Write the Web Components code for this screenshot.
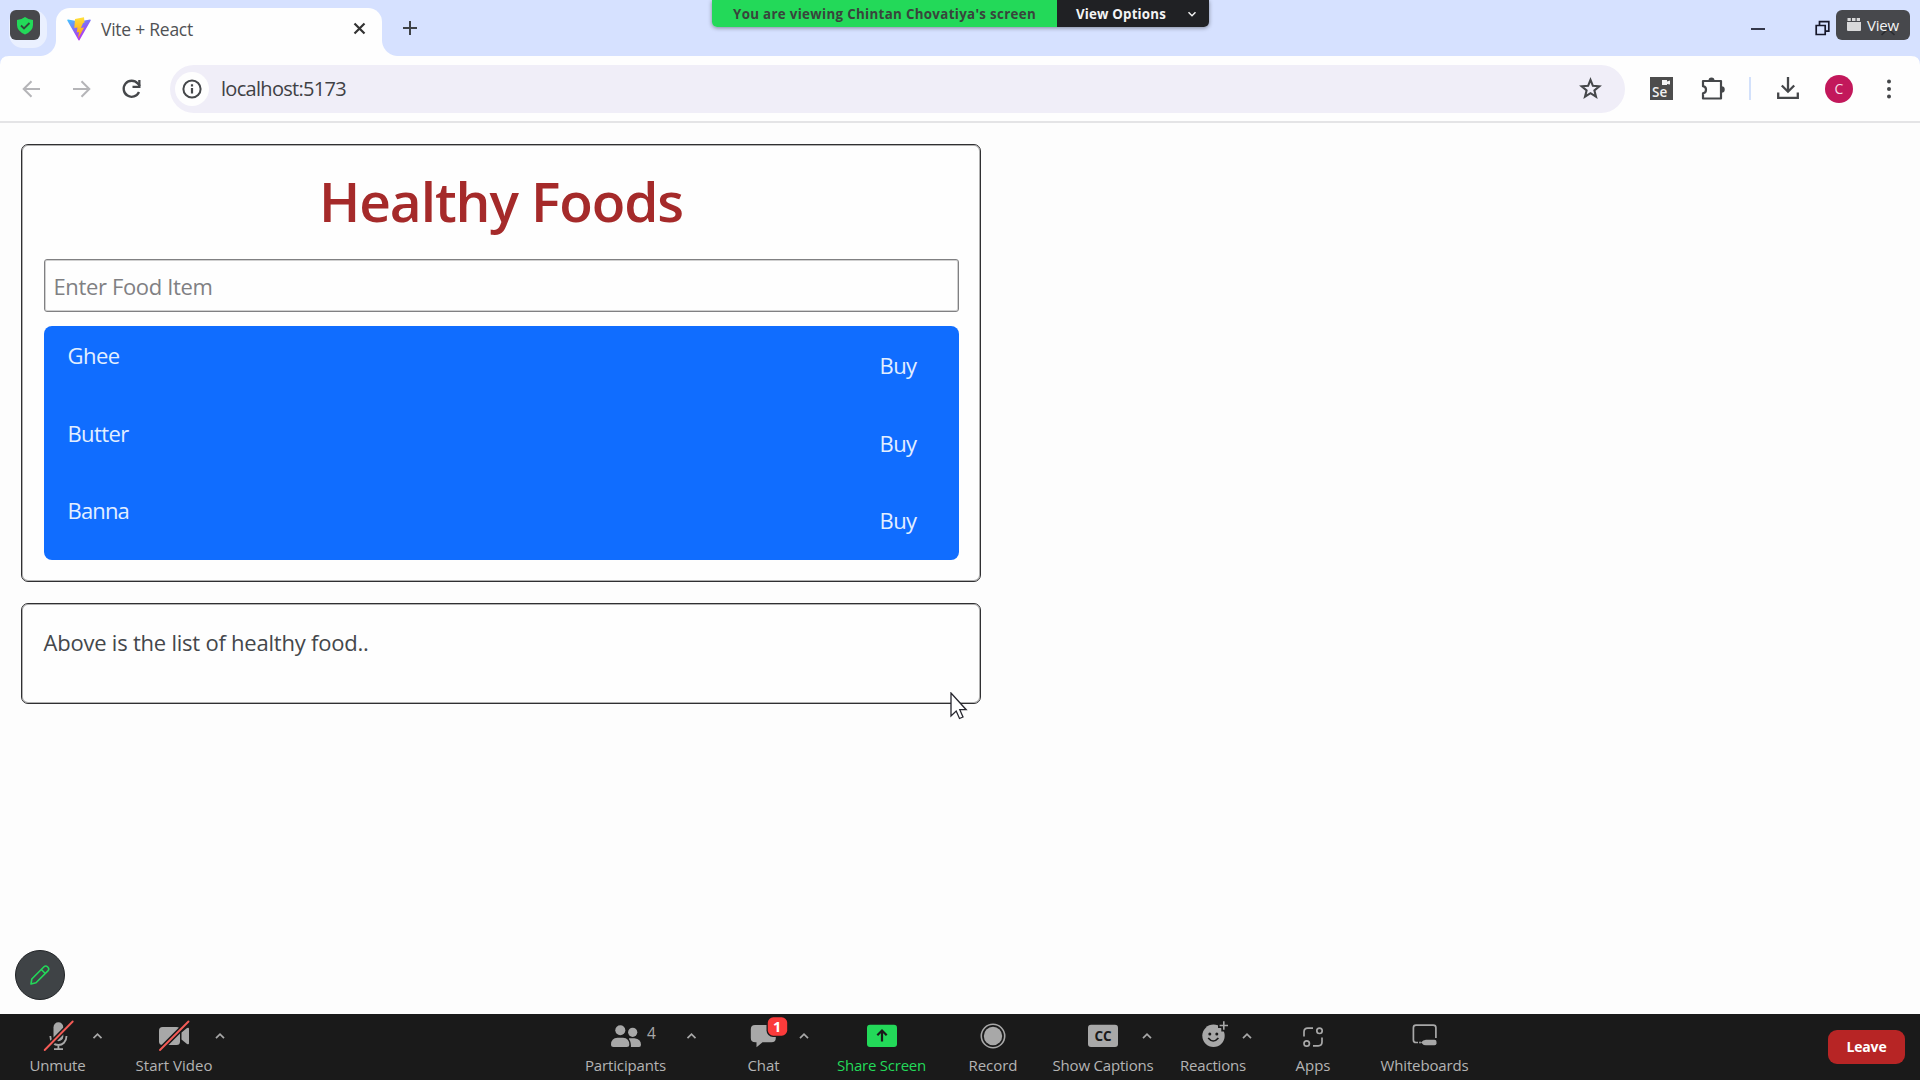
<!DOCTYPE html>
<html lang="en">
<head>
<meta charset="utf-8">
<title>Vite + React</title>
<style>
html,body{margin:0;height:100%;overflow:hidden;background:#fdfdfd}
body{font-family:"Open Sans","Noto Sans",sans-serif}
</style>
</head>
<body>
<meeting-screen></meeting-screen>
<script>
const define = (name, html, ready) => {
  const t = document.createElement('template');
  t.innerHTML = html;
  customElements.define(name, class extends HTMLElement {
    constructor(){ super(); this.attachShadow({mode:'open'}).append(t.content.cloneNode(true)); }
    connectedCallback(){ if (ready) ready(this, this.shadowRoot); }
  });
};

/* One line of text tracked to the width given in "w". */
define('fit-text', `<style>:host{display:block;flex:none;white-space:nowrap}span{display:inline-block}</style><span><slot></slot></span>`,
  (el, root) => {
    const w = +el.getAttribute('w'), s = root.querySelector('span');
    el.style.width = w + 'px';
    s.style.letterSpacing = '0px';
    const n = el.textContent.length, natural = s.getBoundingClientRect().width;
    s.style.letterSpacing = ((w - natural) / n).toFixed(3) + 'px';
  });

define('browser-tabs', `<style>
:host{display:flex;height:56px;background:#d6e1ff;align-items:flex-end;position:relative}
.tab{margin-left:56px;width:326px;height:48px;box-sizing:border-box;background:#fefefe;border-radius:14px 14px 0 0;display:flex;align-items:center;padding:0 16px 7px 11px;position:relative}
.tab:before,.tab:after{content:"";position:absolute;bottom:0;width:16px;height:16px}
.tab:before{left:-16px;background:radial-gradient(circle at 0 0,transparent 15.5px,#fefefe 16.5px)}
.tab:after{right:-16px;background:radial-gradient(circle at 100% 0,transparent 15.5px,#fefefe 16.5px)}
fit-text{font-size:17.5px;color:#505154;margin-left:10px;line-height:24px}
.x{margin-left:auto}
.plus{margin:0 0 20px 20px}
.search{position:absolute;left:9px;top:10px;width:38px;height:38px;border-radius:14px;background:#eaf0ff}
.win{margin-left:auto;margin-right:89px;display:flex;gap:49px;align-self:flex-start;padding-top:20px}
</style>
<div class="search"></div>
<div class="tab">
<svg width="24" height="24" viewBox="0 0 24 24"><defs><linearGradient id="a" x1="0" y1="0" x2=".6" y2="1"><stop offset="0" stop-color="#41c8ff"/><stop offset=".55" stop-color="#8a62f5"/><stop offset="1" stop-color="#c02ff0"/></linearGradient><linearGradient id="b" x1="0" y1="0" x2="0" y2="1"><stop offset="0" stop-color="#ffe03c"/><stop offset="1" stop-color="#ff9d10"/></linearGradient></defs><path d="M1 2.500 12 4.500 23 2.500q1.200 0 .6 1.200L12.600 23q-.6 1-1.200 0L.4 3.700q-.6-1.200.6-1.200z" fill="url(#a)"/><path d="M17 .3 8 2 7.300 11l3.200-.5-.8 5 2.300-.6-.9 6.600 6-11-3.200.5 2.200-5 1.400-.4z" fill="url(#b)"/></svg>
<fit-text w="92">Vite + React</fit-text>
<svg class="x" width="13" height="13" viewBox="0 0 13 13"><path d="M1.500 1.500l10 10M11.500 1.500l-10 10" stroke="#333" stroke-width="2.200"/></svg>
</div>
<svg class="plus" width="16" height="16" viewBox="0 0 16 16"><path d="M8 1v14M1 8h14" stroke="#3f4247" stroke-width="2"/></svg>
<div class="win">
<svg width="16" height="17"><path d="M1 9h14" stroke="#17182a" stroke-width="1.700"/></svg>
<svg width="16" height="17"><path d="M1.200 5.500h9v9h-9zM4.500 5V1.700h9.300v9.500h-3" fill="none" stroke="#17182a" stroke-width="1.700"/></svg>
</div>`);

define('address-bar', `<style>
:host{display:flex;height:67px;box-sizing:border-box;border-bottom:2px solid #e4e4e6;background:#fefefe;align-items:center;padding:0 27px 0 22px;position:relative}
svg{flex:none;display:block;overflow:visible}
.nav{display:flex;gap:31px;width:148px}
.url{width:1455px;height:48px;border-radius:24px;background:#f0eef8;display:flex;align-items:center;box-sizing:border-box;padding:0 24px 0 5px}
.info{width:34px;height:34px;border-radius:50%;background:#fefefe;display:grid;place-items:center}
fit-text{font-size:20px;line-height:30px;color:#404145;margin-left:12px}
.star{margin-left:auto}
.ext{display:flex;align-items:center;flex:1;margin-left:25px}
.av{width:28px;height:28px;border-radius:50%;background:#c2185b;color:#f6dbe6;font-size:14px;line-height:28px;text-align:center;margin-left:26px}
.sep{width:2px;height:23px;background:#d3e1fb;margin-left:24px}
</style>
<div class="nav">
<svg width="19" height="18" viewBox="0 0 19 18"><path d="M18 9H2M9.500 1.200 1.700 9l7.800 7.800" fill="none" stroke="#b5b5b8" stroke-width="2"/></svg>
<svg width="19" height="18" viewBox="0 0 19 18"><path d="M1 9h16M9.500 1.200 17.300 9l-7.800 7.800" fill="none" stroke="#b5b5b8" stroke-width="2"/></svg>
<svg width="20" height="18" viewBox="0 0 20 18"><path d="M17 12a8 8 0 1 1-1.300-8.500L18 6" fill="none" stroke="#45474a" stroke-width="2.300"/><path d="M18.500 0v8h-8V5.700h5.700V0z" fill="#45474a"/></svg>
</div>
<div class="url"><div class="info"><svg width="20" height="20" viewBox="0 0 20 20"><circle cx="10" cy="10" r="8.600" fill="none" stroke="#45474a" stroke-width="2"/><path d="M10 9v5.500M10 5.300v2.200" stroke="#45474a" stroke-width="2.200"/></svg></div>
<fit-text w="125">localhost:5173</fit-text>
<svg class="star" width="21" height="21" viewBox="0 0 21 21"><path d="M10.500 1.800l2.400 6 6.400.5-4.900 4.100 1.600 6.300-5.500-3.500L5 18.700l1.600-6.300-4.900-4.100 6.400-.5z" fill="none" stroke="#45474a" stroke-width="2.100"/></svg></div>
<div class="ext">
<svg width="23" height="23" viewBox="0 0 23 23"><rect width="23" height="23" fill="#4d4d4d"/><path d="M12 3h5v1.500l3-1v4l-3-.5v1h-5z" fill="#f4f4f4"/><text x="2" y="20.300" font-size="13.500" font-weight="600" fill="#f0f0f0">Se</text></svg>
<svg style="margin-left:28px" width="24" height="24" viewBox="0 0 24 24"><path d="M2 4h18v17.500H2v-5.200a3.600 3.600 0 0 0 0-7.100z" fill="none" stroke="#45474a" stroke-width="2.200" stroke-linejoin="round"/><path d="M7.500 3.500a3 3 0 0 1 6 0zM20.500 9.200a3 3 0 0 1 0 6.500z" fill="#45474a"/></svg>
<div class="sep"></div>
<svg style="margin-left:26px" width="22" height="23" viewBox="0 0 22 23"><path d="M11 0v14M4.800 8.500 11 14.700l6.200-6.200M1.200 15.500v5.300h19.600v-5.300" fill="none" stroke="#45474a" stroke-width="2.300"/></svg>
<div class="av">C</div>
<svg style="margin-left:auto" width="6" height="22"><g fill="#45474a"><circle cx="2" cy="3.500" r="2"/><circle cx="2" cy="11" r="2"/><circle cx="2" cy="18.500" r="2"/></g></svg>
</div>`);

define('outline-card', `<style>
:host{display:block;box-sizing:border-box;width:960px;border:1px solid #303032;box-shadow:inset 0 0 0 1px #0000004d;border-radius:7px;padding:0 21.500px;margin-left:21px;background:#fefefe}
</style><slot></slot>`);

define('food-row', `<style>
:host{display:flex;justify-content:space-between;height:77.500px;box-sizing:border-box;padding:13px 42px 0 24px;font-size:22px;line-height:32px;color:#e3efff}
.b{padding-top:10px}
</style><slot></slot><fit-text class="b" w="37">Buy</fit-text>`);

define('food-page', `<style>
:host{display:block;height:891px;box-sizing:border-box;padding-top:21px;background:#fdfdfd}
.one{height:438px}.two{height:101px;margin-top:21px}
h1{margin:0;font-weight:600;font-size:55px;line-height:76px;color:#a52a2a;display:flex;justify-content:center;padding-top:18px;height:96px;box-sizing:content-box}
.in{height:53px;box-sizing:border-box;border:1px solid #808082;box-shadow:inset 0 0 0 1px #0000002e;border-radius:3px;padding:0 9px;display:flex;align-items:center;color:#808083;font-size:22px;line-height:32px;background:#fefefe}
.list{margin-top:14px;background:#106dff;border-radius:8px;height:233.500px;overflow:hidden}
.p{font-size:22px;line-height:32px;color:#44474b;padding-top:22px}
</style>
<outline-card class="one"><h1><fit-text w="364">Healthy Foods</fit-text></h1>
<div class="in"><fit-text w="159">Enter Food Item</fit-text></div>
<div class="list"><food-row><fit-text w="52">Ghee</fit-text></food-row><food-row><fit-text w="61">Butter</fit-text></food-row><food-row><fit-text w="61.500">Banna</fit-text></food-row></div></outline-card>
<outline-card class="two"><fit-text class="p" w="325">Above is the list of healthy food..</fit-text></outline-card>`);

const G = '#a8a8a8', K = '#1a1a1a';
const slash = (x1, x2) => `<path d="M${x1} 36 ${x2} 7.500" stroke="${K}" stroke-width="5"/><path d="M${x1} 36 ${x2} 7.500" stroke="#f45b56" stroke-width="1.900" stroke-linecap="round"/>`;
const icons = {
  mic: `<rect x="-4.500" y="8.300" width="9.800" height="19" rx="4.900" fill="${G}"/><path d="M-7.700 22c0 12 16.200 12 16.200 0M.4 30.500v4M-4 35.200h9" fill="none" stroke="${G}" stroke-width="1.800"/>${slash(-13.300, 14.700)}`,
  video: `<rect x="-15" y="13" width="21" height="18" rx="3.500" fill="${G}"/><path d="M7.500 18.500 13 14q2-1 2 .8v14.500q0 1.700-2 .7l-5.500-4.500z" fill="${G}"/>${slash(-14, 14.500)}`,
  people: `<circle cx="6.700" cy="18.300" r="4.600" fill="${G}"/><path d="M3 24.300h5.500q6.500.7 6.500 6.500 0 2.200-2 2.200H3z" fill="${G}"/><path d="M-14 34.500Q-17 22.500-8 22.500H-3Q6 23 4.800 34.500z" fill="${K}"/><circle cx="-5.700" cy="16.300" r="5" fill="${G}"/><path d="M-8.500 23.700h5.500q6.300.5 6.300 6.800 0 2.500-2.500 2.500h-13.300q-2.500 0-2.500-2.500 0-6.300 6.500-6.800z" fill="${G}"/><text x="21" y="25" font-size="15.500" fill="${G}">4</text>`,
  chat: `<path d="M-9 11h16.500q4.300 0 4.300 4.300V24q0 4.300-4.300 4.300H-1.500L-7.500 33.300v-5h-1q-4.700 0-4.700-4.300v-8.700Q-13.200 11-9 11z" fill="${G}"/><rect x="2.500" y="2" width="22" height="21" rx="6.500" fill="${K}"/><rect x="3.800" y="3.300" width="19.400" height="18.400" rx="5.500" fill="#fb3b3b"/><text x="13.200" y="18" text-anchor="middle" font-size="14.500" font-weight="700" fill="#fff">1</text>`,
  share: `<rect x="-15" y="10.700" width="30" height="22.300" rx="3" fill="#23d959"/><path d="M0 27.500V17M-4.700 21.300 0 16.500l4.700 4.800" fill="none" stroke="${K}" stroke-width="2.200"/>`,
  record: `<circle cx="0" cy="22" r="11.700" fill="none" stroke="${G}" stroke-width="1.600"/><circle cx="0" cy="22" r="9.200" fill="${G}"/>`,
  cc: `<rect x="-15" y="10.700" width="30" height="22.300" rx="3" fill="${G}"/><text x="0" y="26.500" text-anchor="middle" font-size="13.500" font-weight="700" fill="${K}">CC</text>`,
  react: `<circle cx=".5" cy="21.800" r="11.200" fill="${G}"/><path d="M10.800 5.500v12M5 11.500h12" stroke="${K}" stroke-width="5"/><path d="M10.800 7.300v8.400M6.600 11.500H15" stroke="${G}" stroke-width="1.600"/><circle cx="-3.200" cy="20" r="1.500" fill="${K}"/><circle cx="3.800" cy="20" r="1.500" fill="${K}"/><path d="M-4.800 24q5 6 10.200 0" fill="none" stroke="${K}" stroke-width="1.600"/>`,
  apps: `<g fill="none" stroke="${G}" stroke-width="1.700"><path d="M-9 22.500V18q0-3.800 3.800-3.800H0M9 23.500V28q0 3.800-3.800 3.800H0"/><circle cx="6.500" cy="16.800" r="2.700"/><circle cx="-6.300" cy="29.500" r="2.700"/></g>`,
  board: `<path d="M-7 28.500h-2q-2.600 0-2.600-2.600V13.700q0-2.600 2.600-2.600H8.300q2.600 0 2.600 2.600V24" fill="none" stroke="${G}" stroke-width="1.700"/><path d="M-4 28.500q2-2.700 5-2.700h8.500q2 0 2 2v1.500q0 2-2 2H1q-3 0-5-2.800z" fill="${G}"/><circle cx="-5" cy="28.500" r=".9" fill="${G}"/>`
};

define('tool-item', `<style>
:host{display:flex;flex-direction:column;align-items:center;flex:none;color:#b4b4b4}
svg{display:block;overflow:visible}
fit-text{font-size:15px;line-height:22px;margin-top:-4px}
</style><svg width="2" height="44" viewBox="-1 0 2 44"></svg><div id="l"></div>`,
  (el, root) => {
    const c = el.getAttribute('caret');
    root.querySelector('svg').innerHTML = icons[el.getAttribute('icon')] +
      (c ? `<path d="M${c - 4} 24.200l4-4 4 4" fill="none" stroke="${G}" stroke-width="1.700"/>` : '');
    el.style.width = el.getAttribute('w') + 'px';
    el.style.marginLeft = el.getAttribute('gap') + 'px';
    const f = document.createElement('fit-text');
    f.setAttribute('w', el.getAttribute('w'));
    f.textContent = el.getAttribute('label');
    root.querySelector('#l').replaceWith(f);
  });

define('meeting-toolbar', `<style>
:host{display:flex;height:66px;background:#1a1a1a;padding-right:15px}
.leave{margin:16px 0 0 auto;width:77px;height:34px;border-radius:9px;background:#b72525;color:#fff;font-weight:700;font-size:14px;line-height:34px;display:flex;justify-content:center}
.g{color:#23d959}
</style>
<tool-item icon="mic" label="Unmute" w="56" gap="29.500" caret="39.500"></tool-item>
<tool-item icon="video" label="Start Video" w="77" gap="50" caret="46"></tool-item>
<tool-item icon="people" label="Participants" w="81" gap="372.500" caret="65.500"></tool-item>
<tool-item icon="chat" label="Chat" w="32" gap="81.500" caret="40"></tool-item>
<tool-item class="g" icon="share" label="Share Screen" w="89" gap="57.500" ></tool-item>
<tool-item icon="record" label="Record" w="49" gap="42.500"></tool-item>
<tool-item icon="cc" label="Show Captions" w="101" gap="35" caret="44"></tool-item>
<tool-item icon="react" label="Reactions" w="66" gap="26.500" caret="34"></tool-item>
<tool-item icon="apps" label="Apps" w="35" gap="49.500"></tool-item>
<tool-item icon="board" label="Whiteboards" w="88" gap="50"></tool-item>
<div class="leave"><fit-text w="40">Leave</fit-text></div>`);

define('share-banner', `<style>
:host{display:flex;width:497px;height:27px;border-radius:0 0 5px 5px;overflow:hidden;box-shadow:0 1px 4px #0006;font-size:13.300px;font-weight:700;line-height:28px}
.a{width:345px;box-sizing:border-box;padding-left:21px;background:#23d959;color:#39443c}
.b{flex:1;background:#202124;color:#f4f4f4;display:flex;align-items:center;padding:0 12px 0 19px;justify-content:space-between}
</style><div class="a"><fit-text w="303">You are viewing Chintan Chovatiya's screen</fit-text></div>
<div class="b"><fit-text w="90">View Options</fit-text><svg width="10" height="8"><path d="M1.500 2.200 5 5.700l3.500-3.500" fill="none" stroke="#eee" stroke-width="1.500"/></svg></div>`);

define('meeting-screen', `<style>
:host{display:block;width:1920px;height:1080px;position:relative;overflow:hidden}
.o{position:absolute}
.sh{left:10px;top:10px;width:30px;height:30px;border-radius:6px;background:#47484b}
.view{left:1836px;top:10px;width:74px;height:30px;border-radius:6px;background:#47484c;display:flex;align-items:center;box-sizing:border-box;padding-left:11px;color:#f3f3f3;font-size:15px;line-height:28px}
.view fit-text{margin:-1px 0 0 6px;position:relative}
.pen{left:15px;top:950px;width:50px;height:50px;border-radius:50%;box-sizing:border-box;border:1.500px solid #212427;background:#3f4346;display:grid;place-items:center}
.cl{left:44px;top:12px}
</style>
<browser-tabs></browser-tabs><address-bar></address-bar><food-page></food-page><meeting-toolbar></meeting-toolbar>
<svg class="o" style="left:0;top:56px" width="1920" height="12"><path d="M0 0h9Q0 0 0 9zM1920 0h-9q9 0 9 9z" fill="#d6e1ff"/></svg>
<div class="o sh"><svg width="30" height="30"><path d="M15 7q3.500 2.700 8 3v5q0 6-8 9.500Q7 21 7 15v-5q4.500-.3 8-3z" fill="#23d959"/><path d="M11 15.500l3 3 5.500-5.500" fill="none" stroke="#2f4a39" stroke-width="1.800"/></svg></div>
<share-banner class="o" style="left:712px;top:0"></share-banner>
<div class="o view"><svg class="o cl" width="16" height="14"><path d="M1.500 13 8 7l6.500 6M4 2l4 5 4-5" fill="none" stroke="#2b2d32" stroke-width="1.700"/></svg><svg width="14" height="14"><path d="M.5 0h3.300v3H.5zM5 0h3.500v3H5zM9.700 0H13v3H9.700zM0 4h14v8q0 1-1 1H1q-1 0-1-1z" fill="#d9d9da"/></svg><fit-text w="32">View</fit-text></div>
<div class="o pen"><svg width="22" height="22" viewBox="0 0 22 22"><path d="M2 20l.8-5L15 2.800q1.700-1.700 3.700.2t.2 3.900L7 18.800zM12.300 5.500l4 4" fill="none" stroke="#23d959" stroke-width="1.600" stroke-linejoin="round"/></svg></div>
<svg class="o" style="left:950px;top:692px" width="18" height="29"><path d="M1 1v23l5.200-5 3.300 7.500 3.500-1.500-3.200-7.300h6.400z" fill="#fff" stroke="#26262e" stroke-width="1.300"/></svg>`);
</script>
</body>
</html>
